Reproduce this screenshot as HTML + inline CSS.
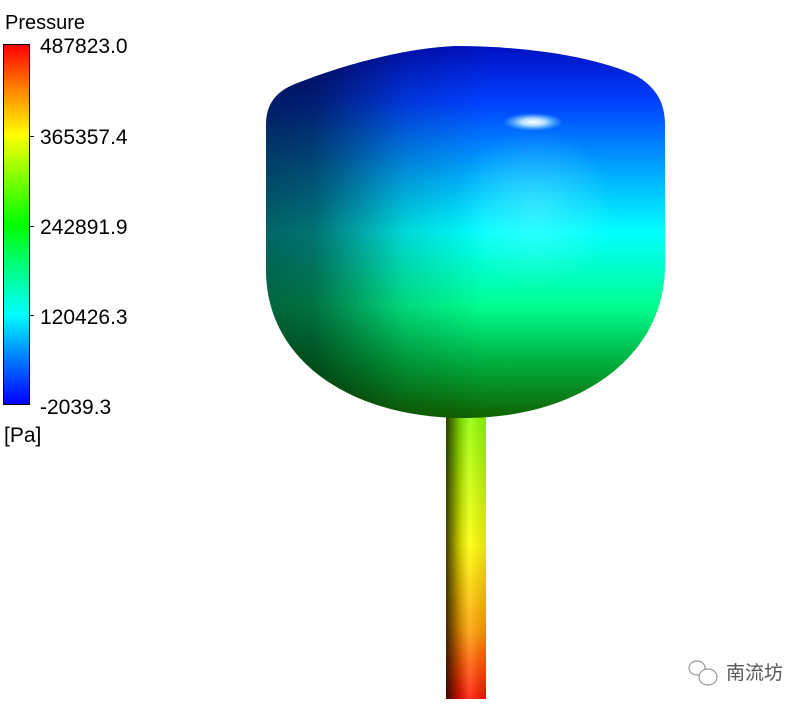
<!DOCTYPE html>
<html><head><meta charset="utf-8"><style>
html,body{margin:0;padding:0;background:#fff;width:811px;height:709px;overflow:hidden;position:relative;font-family:"Liberation Sans",Arial,sans-serif;}
.t{position:absolute;font-size:21px;color:#000;line-height:1;}
#bar{position:absolute;left:3px;top:44px;width:25px;height:359px;border:1px solid #000;background:linear-gradient(to bottom,#ff0000 0%,#ff8000 12%,#ffff00 25%,#80ff00 37%,#00ff00 50%,#00ff80 62%,#00ffff 75%,#0080ff 87%,#0000ff 100%);}
.tick{position:absolute;left:29px;width:5px;height:1px;background:#000;}
</style></head><body>
<div class="t" style="left:5px;top:13px;font-size:20px">Pressure</div>
<div id="bar"></div>
<div class="tick" style="top:136px"></div>
<div class="tick" style="top:226px"></div>
<div class="tick" style="top:315px"></div>
<div class="t" style="left:40px;top:36px;">487823.0</div>
<div class="t" style="left:40px;top:127px;">365357.4</div>
<div class="t" style="left:40px;top:217px;">242891.9</div>
<div class="t" style="left:40px;top:307px;">120426.3</div>
<div class="t" style="left:40px;top:397px;">-2039.3</div>
<div class="t" style="left:4px;top:425px;">[Pa]</div>
<svg width="811" height="709" style="position:absolute;left:0;top:0">
<defs>
<linearGradient id="bv" x1="0" y1="46" x2="0" y2="418" gradientUnits="userSpaceOnUse">
<stop offset="0" stop-color="#0010c0"/><stop offset="0.15" stop-color="#0040ff"/>
<stop offset="0.35" stop-color="#00b0ff"/><stop offset="0.5" stop-color="#00ffff"/>
<stop offset="0.7" stop-color="#00ff90"/><stop offset="0.85" stop-color="#00b040"/>
<stop offset="1" stop-color="#106000"/></linearGradient>
<linearGradient id="bh" x1="266" y1="0" x2="665" y2="0" gradientUnits="userSpaceOnUse">
<stop offset="0" stop-color="#000" stop-opacity="0.6"/><stop offset="0.12" stop-color="#000" stop-opacity="0.55"/>
<stop offset="0.35" stop-color="#000" stop-opacity="0.15"/><stop offset="0.55" stop-color="#000" stop-opacity="0"/>
<stop offset="1" stop-color="#000" stop-opacity="0"/></linearGradient>
<radialGradient id="hl" cx="533" cy="122" r="30" gradientUnits="userSpaceOnUse" gradientTransform="translate(533 122) scale(1 0.3) translate(-533 -122)">
<stop offset="0" stop-color="#fff"/><stop offset="0.4" stop-color="#e0ffff" stop-opacity="0.8"/><stop offset="1" stop-color="#80e0ff" stop-opacity="0"/></radialGradient>
<radialGradient id="gl" cx="535" cy="210" r="80" gradientUnits="userSpaceOnUse">
<stop offset="0" stop-color="#80ffff" stop-opacity="0.4"/><stop offset="1" stop-color="#80ffff" stop-opacity="0"/></radialGradient>
<linearGradient id="sv" x1="0" y1="418" x2="0" y2="699" gradientUnits="userSpaceOnUse">
<stop offset="0" stop-color="#90ff00"/><stop offset="0.45" stop-color="#ffff00"/>
<stop offset="0.75" stop-color="#ffa000"/><stop offset="1" stop-color="#ff1000"/></linearGradient>
<linearGradient id="sh" x1="446" y1="0" x2="486" y2="0" gradientUnits="userSpaceOnUse">
<stop offset="0" stop-color="#000" stop-opacity="0.75"/><stop offset="0.35" stop-color="#000" stop-opacity="0.2"/>
<stop offset="0.6" stop-color="#fff" stop-opacity="0.15"/><stop offset="1" stop-color="#000" stop-opacity="0.1"/></linearGradient>
</defs>
<rect x="446" y="410" width="40" height="289" fill="url(#sv)"/>
<rect x="446" y="410" width="40" height="289" fill="url(#sh)"/>
<path d="M266,270 L266,125 C266,105 275,92 295,84 C350,62 410,48 455,46 C520,46 590,55 635,75 C658,88 665,105 665,125 L665,265 C665,360 575,418 465,418 C350,418 266,360 266,270 Z" fill="url(#bv)"/>
<path d="M266,270 L266,125 C266,105 275,92 295,84 C350,62 410,48 455,46 C520,46 590,55 635,75 C658,88 665,105 665,125 L665,265 C665,360 575,418 465,418 C350,418 266,360 266,270 Z" fill="url(#bh)"/>
<ellipse cx="535" cy="210" rx="80" ry="90" fill="url(#gl)"/>
<ellipse cx="533" cy="122" rx="32" ry="10" fill="url(#hl)"/>
<g fill="none" stroke="#999" stroke-width="1.2">
<ellipse cx="697" cy="668" rx="8" ry="7"/><ellipse cx="708" cy="677" rx="9" ry="8" fill="#fff"/>
</g>
</svg>
<div class="t" style="left:726px;top:664px;font-size:19px;color:#555;font-family:'Liberation Sans','Noto Sans CJK SC',sans-serif;">南流坊</div>
</body></html>
